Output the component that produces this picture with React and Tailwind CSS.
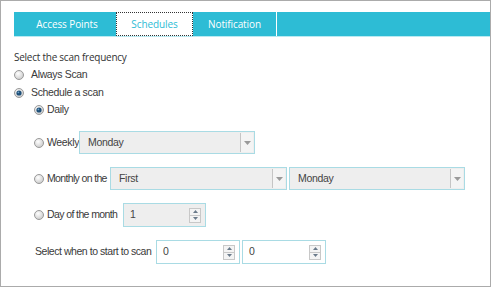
import React from "react";

const Radio = ({ checked }) => (
  <svg width="10" height="10" viewBox="0 0 10 10" className="shrink-0">
    <defs>
      <radialGradient id={checked ? "rgc" : "rgu"} cx="40%" cy="35%" r="70%">
        <stop offset="0%" stopColor="#ffffff" />
        <stop offset="100%" stopColor="#c8c8c8" />
      </radialGradient>
    </defs>
    <circle cx="5" cy="5" r="4.5" fill={`url(#${checked ? "rgc" : "rgu"})`} stroke="#9a9a9a" strokeWidth="1" />
    {checked && <circle cx="5" cy="5" r="2.6" fill="#1d4f78" />}
    {checked && <circle cx="4.4" cy="4.3" r="0.9" fill="#6fa2c8" />}
  </svg>
);

const Select = ({ value, w }) => (
  <div className={`flex shrink-0 h-[23px] ${w} border border-[#a9dbe4] bg-[#eeeeee]`}>
    <div className="flex-1 flex items-center pl-[8px] text-[10.5px] tracking-[-0.3px] text-[#444]">{value}</div>
    <div className="w-[13px] my-[1px] mr-[1px] border-l border-[#c5c5c5] bg-[#f4f4f4] flex items-center justify-center">
      <svg width="7" height="4" viewBox="0 0 7 4"><path d="M0 0 L7 0 L3.5 4 Z" fill="#9a9a9a" /></svg>
    </div>
  </div>
);

const Spinner = () => (
  <div className="w-[12px] h-[15px] border border-[#c8c8c8] bg-[#f4f4f4] flex flex-col">
    <div className="flex-1 flex items-center justify-center border-b border-[#c8c8c8]">
      <svg width="5" height="3" viewBox="0 0 5 3"><path d="M0 3 L5 3 L2.5 0 Z" fill="#6a7a8a" /></svg>
    </div>
    <div className="flex-1 flex items-center justify-center">
      <svg width="5" height="3" viewBox="0 0 5 3"><path d="M0 0 L5 0 L2.5 3 Z" fill="#6a7a8a" /></svg>
    </div>
  </div>
);

const NumBox = ({ value, w, bg }) => (
  <div className={`flex shrink-0 items-center h-[24px] ${w} border border-[#a9dbe4] ${bg} pl-[6px] pr-[4px]`}>
    <div className="flex-1 text-[10.5px] text-[#444]">{value}</div>
    <Spinner />
  </div>
);

export default function App() {
  return (
    <div className="w-[492px] h-[288px] bg-white" style={{ fontFamily: '"Liberation Sans", Arial, sans-serif' }}>
      <div className="w-[491px] h-[287px] border border-[#ababab] pl-[13px] pt-[11px] text-[#3a3a3a]">
        <div className="flex h-[25px] bg-[#2dbcd5] border-b border-[#b8eaf2] text-[10px] tracking-[-0.1px]" style={{ fontFamily: '"Open Sans", sans-serif' }}>
          <div className="w-[102px] flex items-center justify-center pl-[4px] text-white">Access Points</div>
          <div className="w-[77px] flex items-center justify-center bg-white text-[#2dbcd5] border border-dotted border-[#333]">Schedules</div>
          <div className="w-[84px] flex items-center justify-center text-white border-r border-white">Notification</div>
        </div>
        <div className="mt-[11px] h-[18px] flex items-center text-[10px] tracking-[-0.25px] text-[#333]" style={{ fontFamily: '"Open Sans", sans-serif' }}>
          Select the scan frequency
        </div>
        <div className="text-[10.5px] tracking-[-0.35px] whitespace-nowrap">
          <div className="h-[18px] flex items-center gap-[7px]">
            <Radio checked={false} />
            <span>Always Scan</span>
          </div>
          <div className="h-[17px] flex items-center gap-[7px]">
            <Radio checked={true} />
            <span>Schedule a scan</span>
          </div>
          <div className="h-[18px] pl-[20px] flex items-center gap-[3px]">
            <Radio checked={true} />
            <span>Daily</span>
          </div>
          <div className="mt-[12px] h-[23px] pl-[20px] flex items-center">
            <Radio checked={false} />
            <span className="ml-[3px] w-[32px] shrink-0">Weekly</span>
            <Select value="Monday" w="w-[176px]" />
          </div>
          <div className="mt-[13px] h-[23px] pl-[20px] flex items-center">
            <Radio checked={false} />
            <span className="ml-[3px] w-[63px] shrink-0 tracking-[-0.65px]">Monthly on the</span>
            <Select value="First" w="w-[177px]" />
            <div className="w-[2px] shrink-0" />
            <Select value="Monday" w="w-[176px]" />
          </div>
          <div className="mt-[13px] h-[24px] pl-[20px] flex items-center">
            <Radio checked={false} />
            <span className="ml-[3px] w-[76px] shrink-0 tracking-[-0.6px]">Day of the month</span>
            <NumBox value="1" w="w-[83px]" bg="bg-[#eeeeee]" />
          </div>
          <div className="mt-[13px] h-[24px] pl-[21px] flex items-center">
            <span className="w-[121px] shrink-0 tracking-[-0.45px]">Select when to start to scan</span>
            <NumBox value="0" w="w-[84px]" bg="bg-white" />
            <div className="w-[2px] shrink-0" />
            <NumBox value="0" w="w-[84px]" bg="bg-white" />
          </div>
        </div>
      </div>
    </div>
  );
}
